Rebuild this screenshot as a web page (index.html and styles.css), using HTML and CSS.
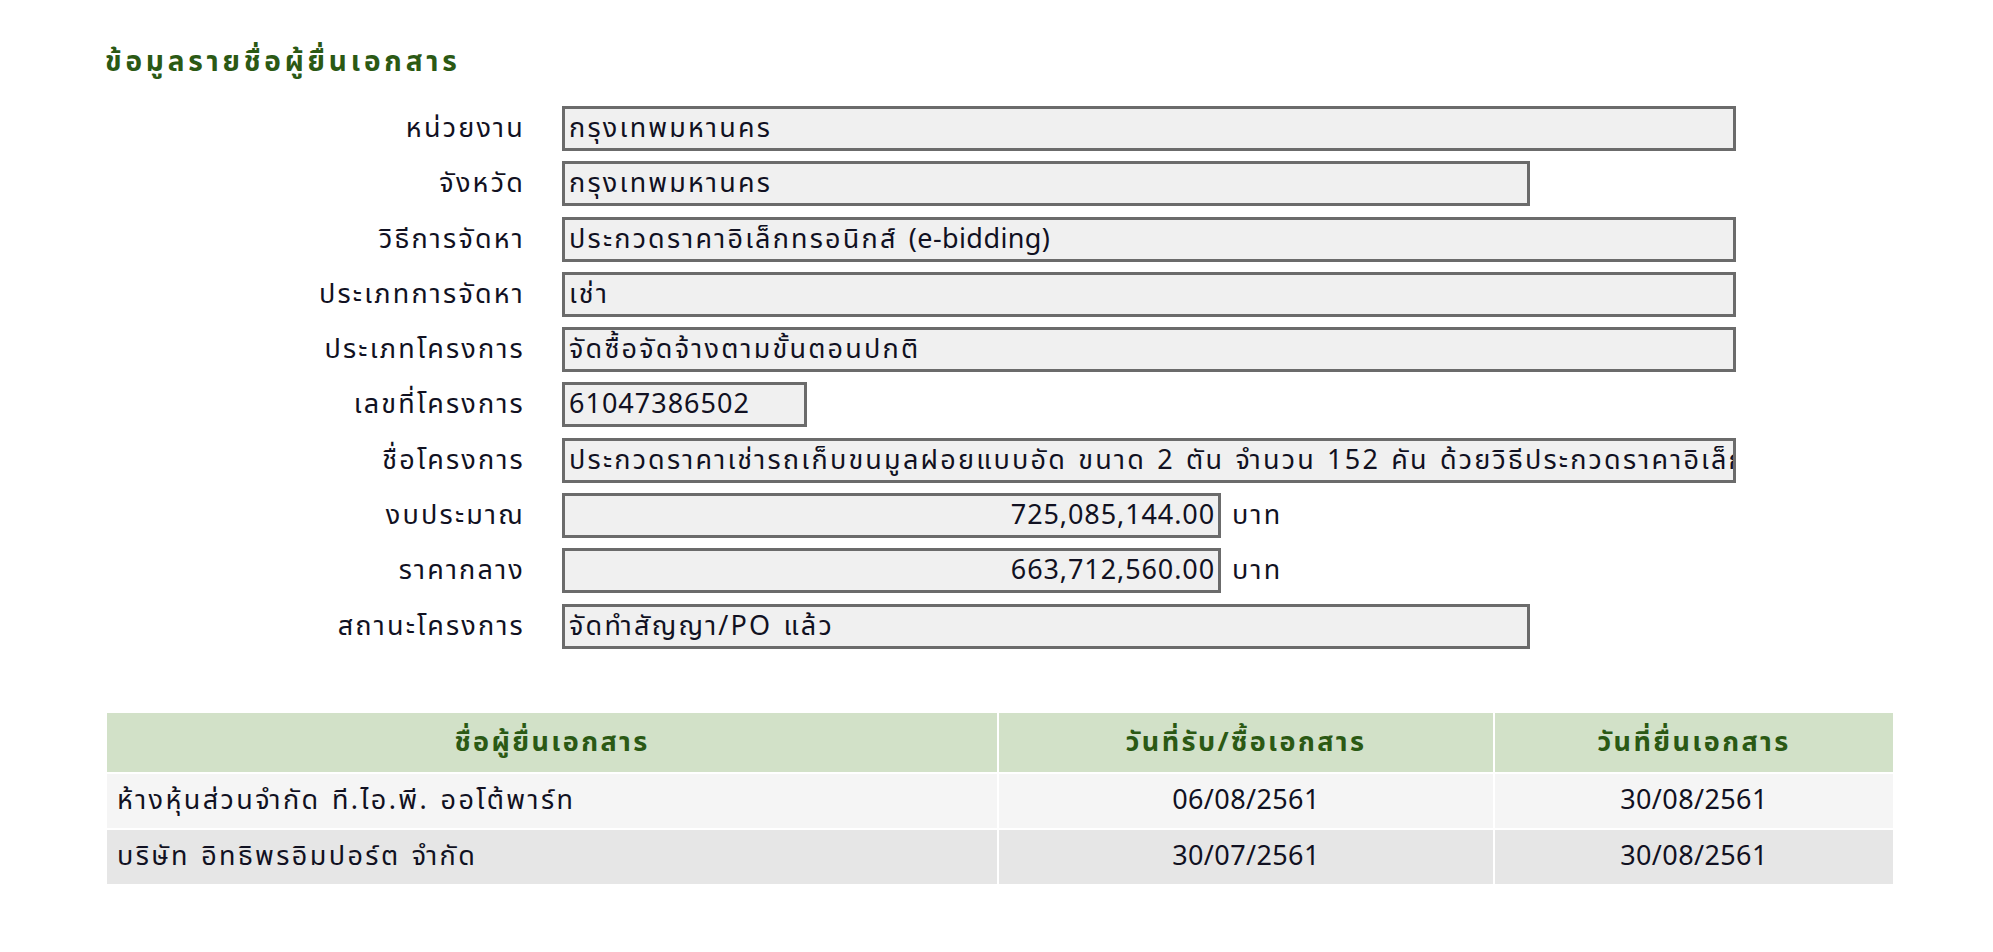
FILE: index.html
```html
<!DOCTYPE html>
<html lang="th">
<head>
<meta charset="utf-8">
<title>ข้อมูลรายชื่อผู้ยื่นเอกสาร</title>
<link rel="stylesheet" href="styles.css">
</head>
<body>
<div class="page">
  <h2 class="title">ข้อมูลรายชื่อผู้ยื่นเอกสาร</h2>
  <div class="form">
    <div class="label">หน่วยงาน</div>
    <div class="field"><div class="box w-full">กรุงเทพมหานคร</div></div>

    <div class="label">จังหวัด</div>
    <div class="field"><div class="box w-mid">กรุงเทพมหานคร</div></div>

    <div class="label">วิธีการจัดหา</div>
    <div class="field"><div class="box w-full">ประกวดราคาอิเล็กทรอนิกส์ <span class="lat">(e-bidding)</span></div></div>

    <div class="label">ประเภทการจัดหา</div>
    <div class="field"><div class="box w-full">เช่า</div></div>

    <div class="label">ประเภทโครงการ</div>
    <div class="field"><div class="box w-full">จัดซื้อจัดจ้างตามขั้นตอนปกติ</div></div>

    <div class="label">เลขที่โครงการ</div>
    <div class="field"><div class="box w-small num-left">61047386502</div></div>

    <div class="label">ชื่อโครงการ</div>
    <div class="field"><div class="box w-full">ประกวดราคาเช่ารถเก็บขนมูลฝอยแบบอัด ขนาด 2 ตัน จำนวน 152 คัน ด้วยวิธีประกวดราคาอิเล็กทรอนิกส์ <span class="lat">(e-bidding)</span></div></div>

    <div class="label">งบประมาณ</div>
    <div class="field"><div class="box w-money num">725,085,144.00</div><span class="unit">บาท</span></div>

    <div class="label">ราคากลาง</div>
    <div class="field"><div class="box w-money num">663,712,560.00</div><span class="unit">บาท</span></div>

    <div class="label">สถานะโครงการ</div>
    <div class="field"><div class="box w-mid">จัดทำสัญญา/PO แล้ว</div></div>
  </div>

  <table class="grid">
    <thead>
      <tr>
        <th class="c1">ชื่อผู้ยื่นเอกสาร</th>
        <th class="c2">วันที่รับ/ซื้อเอกสาร</th>
        <th class="c3">วันที่ยื่นเอกสาร</th>
      </tr>
    </thead>
    <tbody>
      <tr class="odd">
        <td class="name">ห้างหุ้นส่วนจำกัด ที.ไอ.พี. ออโต้พาร์ท</td>
        <td class="date">06/08/2561</td>
        <td class="date">30/08/2561</td>
      </tr>
      <tr class="even">
        <td class="name">บริษัท อิทธิพรอิมปอร์ต จำกัด</td>
        <td class="date">30/07/2561</td>
        <td class="date">30/08/2561</td>
      </tr>
    </tbody>
  </table>
</div>
</body>
</html>
```

FILE: styles.css
```css
html, body {
  margin: 0;
  padding: 0;
  background: #ffffff;
}

body {
  font-family: Tahoma, "Noto Sans Thai", "Noto Sans Thai UI", Loma, Garuda, "DejaVu Sans", sans-serif;
  font-size: 27px;
  color: #111122;
  letter-spacing: 2.2px;
  word-spacing: 2px;
}

.page {
  padding: 43px 0 40px 105px;
  width: 1788px;
}

.title {
  margin: 0 0 23px 0;
  font-size: 28px;
  font-weight: bold;
  color: #2b5914;
  line-height: 40px;
  letter-spacing: 3.8px;
}

.form {
  display: grid;
  grid-template-columns: 420px 1fr;
  column-gap: 37px;
  row-gap: 10.3px;
}

.label {
  text-align: right;
  height: 45px;
  line-height: 45px;
  white-space: nowrap;
}

.field {
  display: flex;
  align-items: center;
  height: 45px;
}

.box {
  box-sizing: border-box;
  height: 45px;
  line-height: 40px;
  border: 3px solid #6b6b6b;
  background: #f0f0f0;
  padding: 0 4px;
  white-space: nowrap;
  overflow: hidden;
}

.lat {
  letter-spacing: 0.4px;
}

.w-full { width: 1174px; }
.w-mid { width: 968px; }
.w-small { width: 245px; }
.w-money { width: 659px; }

.num {
  text-align: right;
  letter-spacing: 0.9px;
  padding-right: 3px;
}

.num-left {
  letter-spacing: 1px;
}

.unit {
  margin-left: 11px;
}

.grid {
  margin-top: 62px;
  width: 1786px;
  border-collapse: collapse;
  table-layout: fixed;
}

.grid th,
.grid td {
  border: 2px solid #ffffff;
  padding: 0 10px;
  white-space: nowrap;
}

.grid th {
  height: 59px;
  background: #d2e1c8;
  color: #2b5914;
  font-weight: bold;
  text-align: center;
  letter-spacing: 2.4px;
}

.grid td {
  height: 54px;
}

.c1 { width: 870px; }
.c2 { width: 474px; }
.c3 { width: 378px; }

.odd td { background: #f5f5f5; }
.even td { background: #e6e6e6; }

.name { text-align: left; letter-spacing: 2.4px; }
.date { text-align: center; letter-spacing: 0.4px; }
```
